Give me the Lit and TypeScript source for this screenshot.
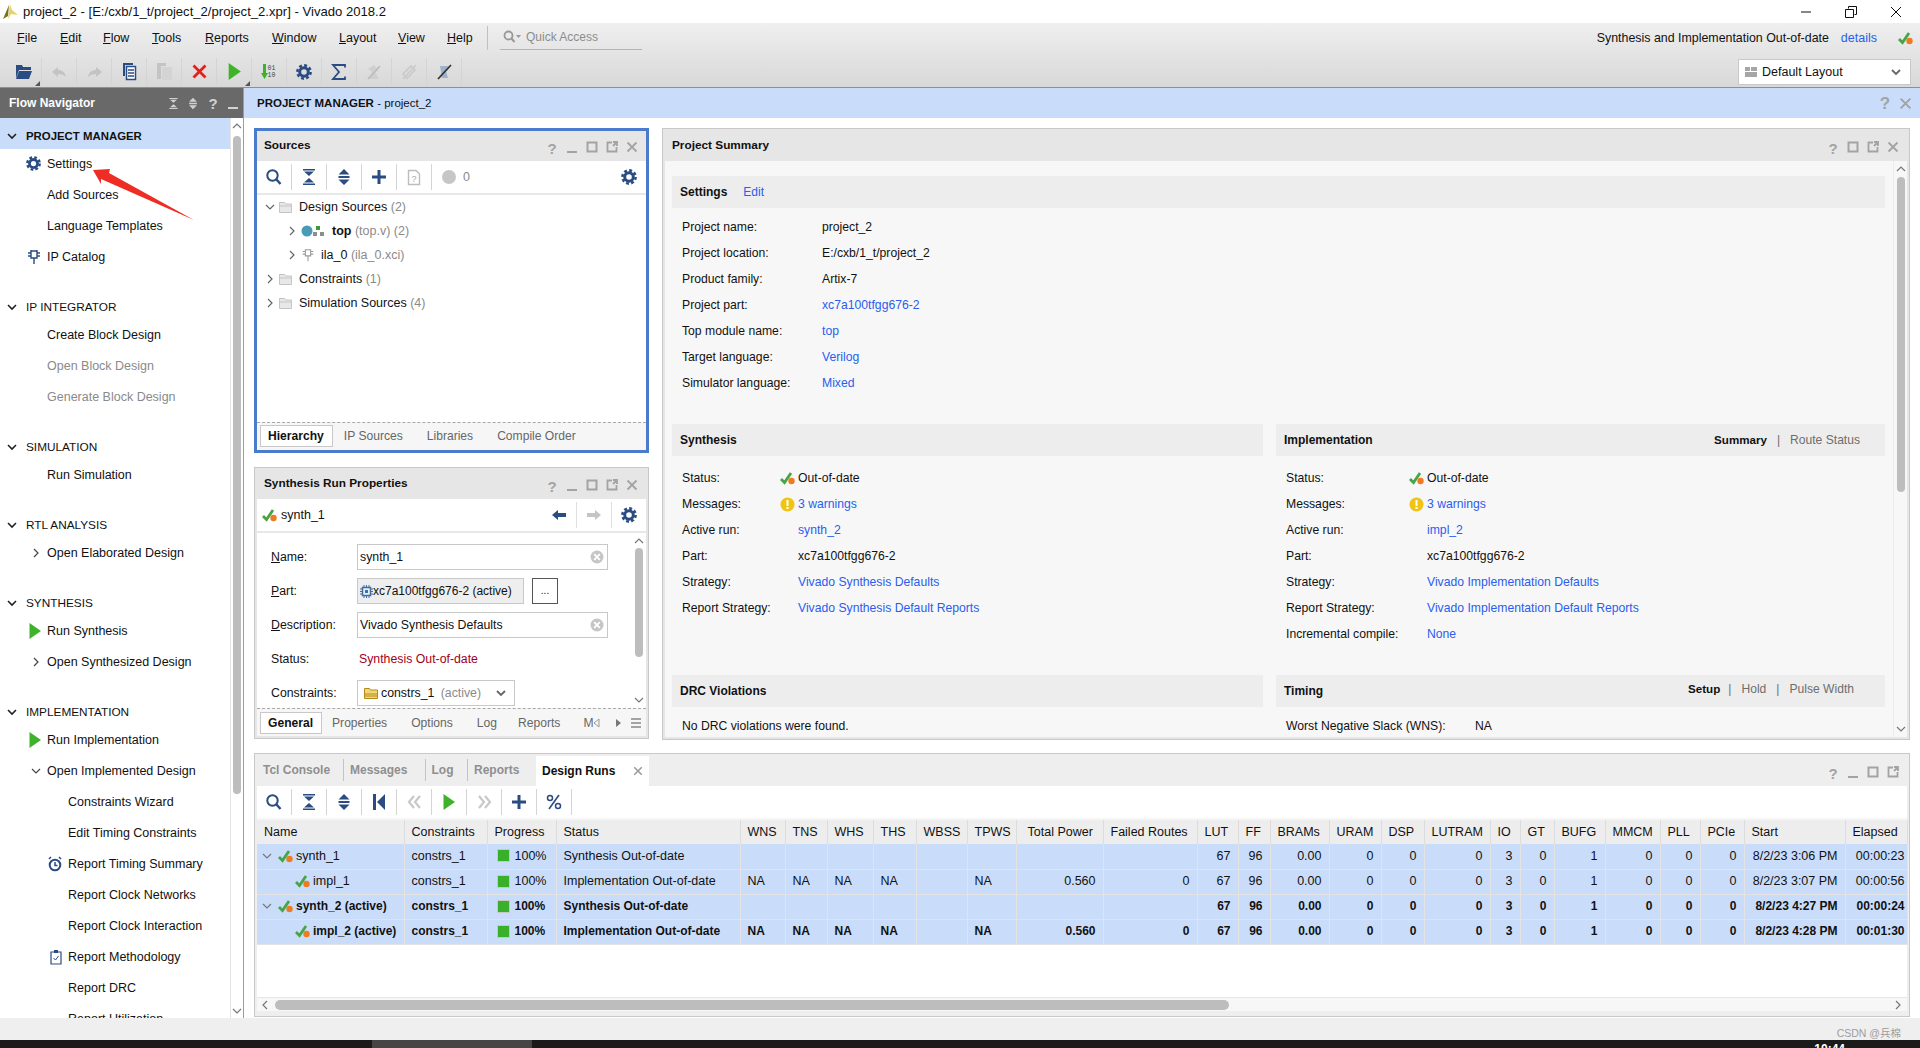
import { LitElement, html, css, TemplateResult } from "lit";
import { customElement } from "lit/decorators.js";

const BLUE = "#2b4c82";
const GREY = "#a3a3a3";

const s = {
  search: (c = BLUE) => html`<svg class="ic" width="18" height="18" viewBox="0 0 18 18"><circle cx="7.5" cy="7.5" r="5.2" fill="none" stroke=${c} stroke-width="2"/><path d="M11.5 11.5L15.5 16" stroke=${c} stroke-width="2.4" fill="none"/></svg>`,
  collapse: (c = BLUE, w = 16, h = 18) => html`<svg class="ic" width=${w} height=${h} viewBox="0 0 16 18"><path d="M2 1h12v1.6H2zM2 15.4h12V17H2zM3 3.5h10L8 8zM3 14.5h10L8 10z" fill=${c}/></svg>`,
  expand: (c = BLUE, w = 14, h = 18) => html`<svg class="ic" width=${w} height=${h} viewBox="0 0 14 18"><path d="M7 1l5.5 5.5h-11zM7 17l-5.5-5.5h11zM1.500 8h11v2h-11z" fill=${c}/></svg>`,
  plus: (c = BLUE) => html`<svg class="ic" width="16" height="16" viewBox="0 0 16 16"><path d="M6.500 1h3v5.500H15v3H9.500V15h-3V9.500H1v-3h5.500z" fill=${c}/></svg>`,
  docq: () => html`<svg class="ic" width="14" height="17" viewBox="0 0 14 17"><path d="M1.500 1.500h7.500l3.500 3.500v10.500h-11z" fill="none" stroke="#bdbdbd" stroke-width="1.400"/><text x="7" y="13" font-size="9" text-anchor="middle" fill="#aaa" font-family="Liberation Sans">?</text></svg>`,
  gear: (c = BLUE, z = 16) => html`<svg class="ic" width=${z} height=${z} viewBox="0 0 16 16"><circle cx="8" cy="8" r="4.300" fill="none" stroke=${c} stroke-width="3"/><circle cx="8" cy="8" r="6.600" fill="none" stroke=${c} stroke-width="2.600" stroke-dasharray="2.900 2.280"/></svg>`,
  play: (w = 12, h = 16) => html`<svg class="ic" width=${w} height=${h} viewBox="0 0 12 16"><path d="M0.500 0L12 8L0.500 16z" fill="#3db32a"/></svg>`,
  check: () => html`<svg class="ic" width="15" height="14" viewBox="0 0 15 14"><path d="M1 8l3.500 3.500L11 2" fill="none" stroke="#46a544" stroke-width="2.800"/><circle cx="11.500" cy="10" r="3.200" fill="#ee7b22"/></svg>`,
  warn: () => html`<svg class="ic" width="15" height="15" viewBox="0 0 15 15"><circle cx="7.500" cy="7.500" r="7" fill="#efc414"/><path d="M6.500 3h2v6h-2zM6.500 10h2v2h-2z" fill="#fff"/></svg>`,
  chevD: (c = "#666", w = 1.200) => html`<svg class="ic" width="10" height="10" viewBox="0 0 10 10"><path d="M1 3l4 4 4-4" fill="none" stroke=${c} stroke-width=${w}/></svg>`,
  chevR: (c = "#666") => html`<svg class="ic" width="10" height="10" viewBox="0 0 10 10"><path d="M3 1l4 4-4 4" fill="none" stroke=${c} stroke-width="1.200"/></svg>`,
  chevU: (c = "#777") => html`<svg class="ic" width="10" height="8" viewBox="0 0 10 8"><path d="M1 6l4-4 4 4" fill="none" stroke=${c} stroke-width="1.200"/></svg>`,
  chevL: (c = "#777") => html`<svg class="ic" width="8" height="10" viewBox="0 0 8 10"><path d="M6 1L2 5l4 4" fill="none" stroke=${c} stroke-width="1.200"/></svg>`,
  folder: () => html`<svg class="ic" width="13" height="12" viewBox="0 0 13 12"><path d="M0.500 1.500h5l1 1.500h6v8.500H.500z" fill="#e8e8e8" stroke="#c4c4c4"/><path d="M.5 5h12" stroke="#c4c4c4"/></svg>`,
  min: (c = GREY) => html`<svg class="ic" width="12" height="12" viewBox="0 0 12 12"><path d="M1 10h10v2H1z" fill=${c}/></svg>`,
  max: (c = GREY) => html`<svg class="ic" width="12" height="12" viewBox="0 0 12 12"><rect x="1.500" y="1.500" width="9" height="9" fill="none" stroke=${c} stroke-width="2"/></svg>`,
  pop: (c = GREY) => html`<svg class="ic" width="12" height="12" viewBox="0 0 12 12"><path d="M6 1.500H1.500v9h9V6M7 1h4v4M11 1L7 5" fill="none" stroke=${c} stroke-width="1.800"/></svg>`,
  close: (c = GREY, z = 12) => html`<svg class="ic" width=${z} height=${z} viewBox="0 0 12 12"><path d="M1.500 1.500l9 9M10.500 1.500l-9 9" fill="none" stroke=${c} stroke-width="1.800"/></svg>`,
  clear: () => html`<svg class="ic" width="14" height="14" viewBox="0 0 14 14"><circle cx="7" cy="7" r="6.500" fill="#c6c6c6"/><path d="M4.200 4.200l5.600 5.600M9.800 4.200l-5.600 5.600" stroke="#fff" stroke-width="1.800"/></svg>`,
  ipcat: (c = BLUE) => html`<svg class="ic" width="14" height="16" viewBox="0 0 14 16"><path d="M4 2h6v7H4zM7 9v6M1 4h3M1 7h3M10 4h3M10 7h3M4 1v1M10 1v1" fill="none" stroke=${c} stroke-width="1.400"/></svg>`,
  clock: () => html`<svg class="ic" width="14" height="16" viewBox="0 0 14 16"><circle cx="7" cy="9" r="5.300" fill="none" stroke=${BLUE} stroke-width="2"/><path d="M7 6v3.500h2.500M1 3l2-2M13 3l-2-2" fill="none" stroke=${BLUE} stroke-width="1.500"/></svg>`,
  clip: () => html`<svg class="ic" width="12" height="16" viewBox="0 0 12 16"><path d="M1 3h10v12H1z" fill="none" stroke=${BLUE} stroke-width="1.200"/><path d="M4 1h4v3H4z" fill=${BLUE}/><path d="M3.500 9l2 2 3-4" fill="none" stroke=${BLUE}/></svg>`,
};

const nav: any[] = [
  { sec: "PROJECT MANAGER", first: true, items: [
    { t: "Settings", i: s.gear(BLUE, 15) }, { t: "Add Sources" }, { t: "Language Templates" }, { t: "IP Catalog", i: s.ipcat() }] },
  { sec: "IP INTEGRATOR", items: [{ t: "Create Block Design" }, { t: "Open Block Design", off: 1 }, { t: "Generate Block Design", off: 1 }] },
  { sec: "SIMULATION", items: [{ t: "Run Simulation" }] },
  { sec: "RTL ANALYSIS", items: [{ t: "Open Elaborated Design", i: s.chevR("#444") }] },
  { sec: "SYNTHESIS", items: [{ t: "Run Synthesis", i: s.play() }, { t: "Open Synthesized Design", i: s.chevR("#444") }] },
  { sec: "IMPLEMENTATION", items: [
    { t: "Run Implementation", i: s.play() }, { t: "Open Implemented Design", i: s.chevD("#444") },
    { t: "Constraints Wizard", l2: 1 }, { t: "Edit Timing Constraints", l2: 1 },
    { t: "Report Timing Summary", l2: 1, i: s.clock() }, { t: "Report Clock Networks", l2: 1 }, { t: "Report Clock Interaction", l2: 1 },
    { t: "Report Methodology", l2: 1, i: s.clip() }, { t: "Report DRC", l2: 1 }, { t: "Report Utilization", l2: 1 }] },
];

const colEnds = [404, 487, 556, 740, 785, 827, 873, 916, 967, 1016, 1103, 1197, 1238, 1270, 1329, 1381, 1424, 1490, 1520, 1554, 1605, 1660, 1700, 1744, 1845, 1907];
const colW = colEnds.map((e, i) => e - (i ? colEnds[i - 1] : 257));
const heads = ["Name", "Constraints", "Progress", "Status", "WNS", "TNS", "WHS", "THS", "WBSS", "TPWS", "Total Power", "Failed Routes", "LUT", "FF", "BRAMs", "URAM", "DSP", "LUTRAM", "IO", "GT", "BUFG", "MMCM", "PLL", "PCIe", "Start", "Elapsed"];
const runs = [
  { n: "synth_1", top: 1, b: 0, st: "Synthesis Out-of-date", na: 0, start: "8/2/23 3:06 PM", el: "00:00:23" },
  { n: "impl_1", top: 0, b: 0, st: "Implementation Out-of-date", na: 1, start: "8/2/23 3:07 PM", el: "00:00:56" },
  { n: "synth_2 (active)", top: 1, b: 1, st: "Synthesis Out-of-date", na: 0, start: "8/2/23 4:27 PM", el: "00:00:24" },
  { n: "impl_2 (active)", top: 0, b: 1, st: "Implementation Out-of-date", na: 1, start: "8/2/23 4:28 PM", el: "00:01:30" },
];
const bottomTabs: [string, number][] = [["Tcl Console", 87], ["Messages", 81.5], ["Log", 42.5], ["Reports", 68]];

@customElement("app-root")
export class AppRoot extends LitElement {
  static styles = css`
    :host { display: block; width: 1920px; height: 1048px; overflow: hidden; position: relative; background: #fff;
      font: 12.5px "Liberation Sans", Arial, sans-serif; color: #111; }
    * { box-sizing: border-box; }
    .ic { display: block; flex: none; overflow: visible; }
    u { text-decoration: underline; text-underline-offset: 1px; }
    .root { display: flex; flex-direction: column; height: 1048px; }
    .title { height: 23px; display: flex; align-items: center; padding-left: 3px; gap: 4px; font-size: 13.1px; flex: none; }
    .title .sp { flex: 1; }
    .win { display: flex; gap: 31px; padding-right: 17px; }
    .band { height: 65px; flex: none; background: linear-gradient(#efefef, #d8d8d8); border-bottom: 1px solid #8f8f8f; display: flex; flex-direction: column; }
    .menu { height: 29px; display: flex; align-items: center; flex: none; }
    .menu .m { width: var(--w); }
    .mbox { padding-left: 17px; display: flex; align-items: center; }
    .msep { width: 1px; height: 24px; background: #c0c0c0; margin-right: 12px; }
    .qa { width: 142px; height: 23px; margin-top: 1px; border-bottom: 1px solid #b5b5b5; display: flex; align-items: center; gap: 4px; padding: 0 0 2px 3px; color: #8c8c8c; font-size: 12px; }
    .grow { flex: 1; }
    .ood { margin-right: 12px; font-size: 12.4px; }
    .link { color: #2a5df0; }
    .mcheck { margin: 0 7px 0 21px; }
    .tools { height: 35px; display: flex; align-items: center; padding: 4px 0 0 7px; }
    .tb { width: 35px; height: 28px; display: flex; align-items: center; justify-content: center; border-right: 1px solid #d4d4d4; position: relative; flex: none; }
    .tb .corner { position: absolute; right: 1px; bottom: 0; width: 0; height: 0; border-left: 5px solid transparent; border-bottom: 5px solid #555; }
    .layout { margin: 0 9px 0 auto; width: 173px; height: 26px; background: #fff; border: 1px solid #c8c8c8; display: flex; align-items: center; padding: 0 9px 0 6px; gap: 5px; }
    .main { flex: 1; display: flex; min-height: 0; }
    .nav { width: 244px; flex: none; border-right: 1px solid #9c9c9c; display: flex; flex-direction: column; }
    .navh { height: 30px; flex: none; background: #696969; color: #fff; font-weight: bold; display: flex; align-items: center; padding-left: 9px; font-size: 12px; }
    .navh span { flex: 1; }
    .navh .c { width: 20px; display: flex; justify-content: center; }
    .navb { flex: 1; display: flex; min-height: 0; }
    .navl { width: 230px; flex: none; overflow: hidden; }
    .vs { display: flex; flex-direction: column; align-items: center; flex: none; }
    .nvs { width: 13px; border-left: 1px solid #e4e4e4; padding-top: 4px; }
    .thumb { background: #bdbdbd; border-radius: 4px; width: 8px; }
    .nvs .thumb { height: 658px; margin: 6px 0 0; }
    .vs .sp { flex: 1; }
    .sec { height: 25px; margin-top: 22px; display: flex; align-items: center; padding-left: 7px; gap: 9px; font-size: 11.800px; }
    .sec.first { height: 31px; margin: 0 0 -1px; background: #c9ddfb; padding-top: 4px; font-size: 11.400px; }
    .sec.first b { font-weight: bold; }
    .sec b { font-weight: normal; }
    .it { height: 31px; display: flex; align-items: center; }
    .it.off { color: #8a8a8a; }
    .slot { width: 47px; flex: none; display: flex; justify-content: flex-end; padding-right: 6px; }
    .l2 .slot { width: 68px; }
    .right { flex: 1; min-width: 0; display: flex; flex-direction: column; }
    .rhead { height: 30px; flex: none; background: #c9ddfb; display: flex; align-items: center; padding: 0 8px 0 13px; font-size: 11.500px; gap: 8px; }
    .rhead span { flex: 1; }
    .rhead b { font-weight: bold; }
    .content { flex: 1; display: grid; grid-template-columns: 395px 1248px; grid-template-rows: 612px 264px; gap: 13px; padding: 10px 0 0 10px; }
    .col { display: flex; flex-direction: column; }
    .panel { border: 1px solid #c8c8c8; padding: 2px; background: #e6e6e6; display: flex; flex-direction: column; overflow: hidden; }
    .panel.active { border: 3px solid #4a7ccb; padding: 0; }
    .src { height: 325px; flex: none; margin-bottom: 14px; }
    .prop { height: 272px; flex: none; }
    .ph { height: 30px; flex: none; display: flex; align-items: center; padding: 0 0 3px 7px; font-weight: bold; font-size: 11.800px; }
    .prop .ph { height: 29px; padding-bottom: 4px; }
    .ph span { flex: 1; }
    .ctl { display: flex; gap: 8px; padding: 6px 8px 0 0; }
    .tbar { height: 32px; flex: none; background: #fff; display: flex; align-items: center; }
    .tbar .tb { height: 26px; }
    .rule { height: 2px; flex: none; background: #e8e8e8; }
    .zero { display: flex; align-items: center; gap: 7px; color: #8a8a8a; padding-left: 10px; }
    .dot { width: 14px; height: 14px; border-radius: 50%; background: #c6c6c6; }
    .tend { margin-left: auto; padding-right: 9px; }
    .tree { flex: 1; background: #fff; min-height: 0; }
    .tr { height: 24px; display: flex; align-items: center; }
    .tr .ch { width: 10px; margin-right: 4px; }
    .muted { color: #8a8a8a; }
    .t0 { padding-left: 8px; }
    .t0 .folder { margin-right: 7px; }
    .t1 { padding-left: 30px; }
    .t1 .g { margin-right: 7px; }
    .t1 .g6 { margin-right: 6px; }
    .tbs { height: 28px; flex: none; background: #f6f6f6; border-top: 1px dashed #a8a8a8; display: flex; align-items: center; padding: 0 0 2px 3px; color: #666; font-size: 12.100px; }
    .prop .tbs { padding-bottom: 0; }
    .tbs .a { height: 22px; border: 1px solid #c8c8c8; background: #fff; color: #111; font-weight: bold; display: flex; align-items: center; padding: 0 8px 0 7px; margin-right: 11px; }
    .prop .tbs .a { margin-right: 10px; }
    .tbs .n { margin-right: 24px; }
    .tbs .g21 { margin-right: 21px; }
    .tbs .g22 { margin-right: 23px; }
    .tbs .mm { display: flex; align-items: center; width: 32px; }
    .tbs .menu-i { margin-left: 8px; }
    .form { flex: 1; background: #fff; display: flex; min-height: 0; overflow: hidden; font-size: 12.300px; }
    .fbody { flex: 1; padding: 11px 0 0 14px; }
    .fr { display: flex; align-items: center; height: 26px; margin-bottom: 8px; flex: none; }
    .fr .lb { width: 86px; flex: none; }
    .inp { height: 26px; border: 1px solid #c8c8c8; display: flex; align-items: center; padding: 0 3px 0 2px; width: 251px; justify-content: space-between; }
    .pi { width: 167px; background: #eee; justify-content: flex-start; font-size: 12px; }
    .dots { width: 26px; height: 26px; border: 1px solid #555; margin-left: 8px; display: flex; align-items: center; justify-content: center; font-size: 10px; line-height: 1; }
    .red { color: #a30021; padding-left: 2px; }
    .sel { width: 158px; padding: 0 8px 0 6px; }
    .sel .nm { display: flex; gap: 3px; align-items: center; }
    .fvs { width: 14px; padding-top: 4px; }
    .fvs .thumb { height: 109px; margin-top: 3px; }
    .arrows { display: flex; margin-left: auto; align-items: center; }
    .arrows .b { width: 35px; height: 26px; display: flex; align-items: center; justify-content: center; border-right: 1px solid #e0e0e0; }
    .arrows .b:last-child { border-right: 0; width: 34px; }
    .runlabel { display: flex; align-items: center; gap: 4px; padding-left: 5px; }
    .sum { flex: 1; min-height: 0; display: flex; background: #f7f7f7; }
    .sbody { width: 1228px; flex: none; padding: 15px 8px 0 7px; overflow: hidden; font-size: 12.200px; }
    .svs { width: 14px; padding-top: 4px; border-left: 1px solid #ececec; }
    .svs .thumb { height: 315px; margin-top: 4px; }
    .sh { height: 32px; background: #ededed; display: flex; align-items: center; padding-left: 8px; font-weight: bold; font-size: 12px; }
    .sh .rt { margin-left: auto; display: flex; gap: 10px; font-weight: normal; color: #6d6d6d; font-size: 12.100px; }
    .sh .rt b { color: #111; font-size: 11.600px; }
    .r1 { padding-right: 25px; }
    .r2 { padding-right: 31px; margin-top: -4px; }
    .r2 b { margin-right: -2px; }
    .srows { padding: 6px 0 28px 10px; }
    .srow { height: 26px; display: flex; align-items: center; }
    .w140 { width: 140px; }
    .w98 { width: 98px; }
    .w123 { width: 123px; }
    .w189 { width: 189px; }
    .iw { width: 18px; flex: none; display: flex; }
    .two { display: grid; grid-template-columns: 591px 609px; column-gap: 13px; }
    .srows.t { padding-top: 9px; height: 219px; }
    .bot { grid-column: 1 / 3; background: #eee; }
    .btabs { height: 30px; flex: none; display: flex; align-items: stretch; background: #eee; color: #8f8f8f; font-weight: bold; font-size: 12px; }
    .bt { display: flex; align-items: center; padding: 0 6px; border-right: 1px solid #c4c4c4; margin: 3px 0 5px; width: var(--w); flex: none; }
    .bt.last { border-right: 0; }
    .bt.on { background: #fff; color: #111; margin: 0; border: 0; padding: 0 6px; width: 113px; justify-content: space-between; }
    .bctl { margin-left: auto; padding: 10px 8px 0 0; display: flex; gap: 8px; }
    .band2 { height: 2px; flex: none; background: #f6f6f6; }
    .tw { flex: 1; background: #fff; min-height: 0; }
    table { border-collapse: collapse; table-layout: fixed; width: 1650px; }
    th { height: 24px; background: #ededed; font-weight: normal; text-align: left; padding: 0 0 0 7px; border-right: 1px solid #dcdcdc; white-space: nowrap; overflow: hidden; }
    th.tp { padding-left: 11px; }
    td { height: 25px; background: #c9ddfb; border-right: 1px solid #e3e3e3; border-bottom: 1px solid #e3e3e3; padding: 0 7px 1px; white-space: nowrap; overflow: hidden; }
    td.num { text-align: right; }
    td.pc { padding-left: 9px; }
    td.nc { padding-left: 5px; }
    td.nc.child { padding-left: 38px; }
    td.last { padding-right: 2px; }
    tr.b td { font-weight: bold; font-size: 12px; }
    .nmc { display: flex; align-items: center; gap: 3px; }
    .pr { display: flex; align-items: center; gap: 5px; }
    .sq { width: 13px; height: 13px; background: #3aaf29; border: 1px solid #c8c8c8; }
    .hs { height: 14px; flex: none; background: #f7f7f7; border-top: 1px solid #e6e6e6; display: flex; align-items: center; padding: 0 4px; margin-bottom: 3px; }
    .hth { width: 954px; height: 10px; background: #bdbdbd; border-radius: 5px; margin-left: 6px; }
    .foot { height: 22px; flex: none; background: #efefef; display: flex; justify-content: flex-end; align-items: center; padding: 6px 19px 0 0; color: #9d9d9d; font-size: 10.500px; font-family: "Liberation Sans", "Noto Sans CJK SC", sans-serif; }
    .task { height: 8px; flex: none; background: #1a1a1a; display: flex; overflow: hidden; }
    .task i { display: block; width: 160px; background: #454545; margin-left: 372px; }
    .task span { margin-left: auto; margin-right: 75px; color: #fff; font-size: 12px; line-height: 19px; font-weight: bold; }
    .arrow { position: absolute; left: 0; top: 0; pointer-events: none; }
  `;

  private q(size = 15) {
    return html`<svg class="ic" width="12" height="14" viewBox="0 0 12 14"><text x="6" y="13" text-anchor="middle" font-size=${size} font-weight="bold" fill=${GREY} font-family="Liberation Sans">?</text></svg>`;
  }

  private ctl(withMin = true) {
    return html`<div class="ctl">${this.q()}${withMin ? s.min() : ""}${s.max()}${s.pop()}${s.close()}</div>`;
  }

  private tb(i: TemplateResult | string, corner = false) {
    return html`<div class="tb">${i}${corner ? html`<div class="corner"></div>` : ""}</div>`;
  }

  private renderNav() {
    return nav.map((g) => html`
      <div class="sec ${g.first ? "first" : ""}">${s.chevD("#222", 1.6)}<b>${g.sec}</b></div>
      ${g.items.map((it: any) => html`<div class="it ${it.off ? "off" : ""} ${it.l2 ? "l2" : ""}"><div class="slot">${it.i ?? ""}</div>${it.t}</div>`)}
    `);
  }

  private rowsOf(rows: any[]) {
    return rows.map((r) => html`<div class="srow"><div class=${r.w}>${r.l}</div>${r.i !== undefined ? html`<div class="iw">${r.i}</div>` : ""}<div class=${r.link ? "link" : ""}>${r.v}</div></div>`);
  }

  private renderTable() {
    return html`<table><colgroup>${colW.map((w) => html`<col style="width:${w}px"/>`)}</colgroup>
      <thead><tr>${heads.map((h) => html`<th class=${h === "Total Power" ? "tp" : ""}>${h}</th>`)}</tr></thead>
      <tbody>${runs.map((r) => {
        const na = r.na ? "NA" : "";
        return html`<tr class=${r.b ? "b" : ""}>
          <td class="nc ${r.top ? "" : "child"}"><div class="nmc">${r.top ? html`${s.chevD("#777")}<span></span>` : ""}${s.check()}${r.n}</div></td>
          <td>constrs_1</td>
          <td class="pc"><div class="pr"><div class="sq"></div>100%</div></td>
          <td>${r.st}</td>
          <td>${na}</td><td>${na}</td><td>${na}</td><td>${na}</td><td></td><td>${na}</td>
          <td class="num">${r.na ? "0.560" : ""}</td><td class="num">${r.na ? "0" : ""}</td>
          <td class="num">67</td><td class="num">96</td><td class="num">0.00</td><td class="num">0</td><td class="num">0</td><td class="num">0</td>
          <td class="num">3</td><td class="num">0</td><td class="num">1</td><td class="num">0</td><td class="num">0</td><td class="num">0</td>
          <td class="num">${r.start}</td><td class="num last">${r.el}</td>
        </tr>`;
      })}</tbody></table>`;
  }

  render() {
    return html`<div class="root">
      <div class="title">
        <svg class="ic" width="16" height="16" viewBox="0 0 16 16"><path d="M7 0l2 6 6 5-7-1-3 5 1-8z" fill="#e7d26a"/><path d="M6 1L0 15l5-3z" fill="#75751c"/></svg>
        <span>project_2 - [E:/cxb/1_t/project_2/project_2.xpr] - Vivado 2018.2</span><span class="sp"></span>
        <div class="win">
          <svg class="ic" width="14" height="14" viewBox="0 0 14 14"><path d="M2 7h10" stroke="#111"/></svg>
          <svg class="ic" width="14" height="14" viewBox="0 0 14 14"><path d="M4.500 3.500v-2h8v8h-2M1.500 4.500h8v8h-8z" fill="none" stroke="#111"/></svg>
          <svg class="ic" width="14" height="14" viewBox="0 0 14 14"><path d="M2 2l10 10M12 2L2 12" stroke="#111"/></svg>
        </div>
      </div>
      <div class="band">
        <div class="menu mbox">
          ${[["F","ile",43],["E","dit",43],["F","low",49],["T","ools",53],["R","eports",67],["W","indow",67],["L","ayout",59],["V","iew",49],["H","elp",40]].map(([a,b,w]) => html`<div class="m" style="--w:${w}px"><u>${a}</u>${b}</div>`)}
          <div class="msep"></div>
          <div class="qa"><svg class="ic" width="19" height="13" viewBox="0 0 19 13"><circle cx="5.500" cy="5.500" r="4" fill="none" stroke="#999" stroke-width="1.800"/><path d="M8.500 8.500l3 3.500" stroke="#999" stroke-width="2"/><path d="M13 5h5l-2.500 3z" fill="#999"/></svg>Quick Access</div>
          <span class="grow"></span>
          <span class="ood">Synthesis and Implementation Out-of-date</span><span class="link">details</span><span class="mcheck">${s.check()}</span>
        </div>
        <div class="tools">
          ${this.tb(html`<svg class="ic" width="18" height="16" viewBox="0 0 18 16"><path d="M1 1h6l1 2h8v3H4L1 14z" fill=${BLUE}/><path d="M4 7h13l-3 8H1z" fill=${BLUE}/></svg>`, true)}
          ${this.tb(html`<svg class="ic" width="17" height="12" viewBox="0 0 17 12"><path d="M7 1L1 6l6 5V8c4 0 6 1 8 3-1-5-4-7-8-7z" fill="#c3c3c3"/></svg>`)}
          ${this.tb(html`<svg class="ic" width="17" height="12" viewBox="0 0 17 12"><path d="M10 1l6 5-6 5V8c-4 0-6 1-8 3 1-5 4-7 8-7z" fill="#c3c3c3"/></svg>`)}
          ${this.tb(html`<svg class="ic" width="15" height="18" viewBox="0 0 15 18"><path d="M1 0h10v2H3v11H1z" fill=${BLUE}/><path d="M4.500 3.500h9v13h-9z" fill="#fff" stroke=${BLUE} stroke-width="1.500"/><path d="M6 7h6M6 10h6M6 13h6" stroke=${BLUE} stroke-width="1.300"/></svg>`)}
          ${this.tb(html`<svg class="ic" width="15" height="17" viewBox="0 0 15 17"><path d="M0 0h9v3H4v13H0z" fill="#c4c4c4"/><path d="M5 4h10v13H5z" fill="#d4d4d4"/></svg>`)}
          ${this.tb(html`<svg class="ic" width="15" height="15" viewBox="0 0 15 15"><path d="M1.500 1.500l12 12M13.500 1.500l-12 12" stroke="#e3201b" stroke-width="2.800"/></svg>`)}
          ${this.tb(s.play(13, 17), true)}
          ${this.tb(html`<svg class="ic" width="16" height="17" viewBox="0 0 16 17"><path d="M2 1h3v9h2l-3.500 6L0 10h2z" fill="#3db32a"/><text x="6.500" y="7" font-size="6.500" font-family="Liberation Mono" fill="#444">01</text><text x="6.500" y="14" font-size="6.500" font-family="Liberation Mono" fill="#444">10</text></svg>`)}
          ${this.tb(s.gear())}
          ${this.tb(html`<svg class="ic" width="14" height="16" viewBox="0 0 14 16"><path d="M13 3.500V1H1l6 7-6 7h12v-2.500" fill="none" stroke=${BLUE} stroke-width="1.800"/></svg>`)}
          ${this.tb(html`<svg class="ic" width="15" height="16" viewBox="0 0 15 16"><path d="M7 1l5 6-4 1 4 7H1l4-7-4-3" fill="#cfcfcf"/><path d="M1 15L13 2" stroke="#bbb" stroke-width="1.500"/></svg>`)}
          ${this.tb(html`<svg class="ic" width="15" height="16" viewBox="0 0 15 16"><path d="M9 2l4 4-8 8-4-4zM1 15L14 1" fill="none" stroke="#c9c9c9" stroke-width="1.600"/></svg>`)}
          ${this.tb(html`<svg class="ic" width="15" height="16" viewBox="0 0 15 16"><path d="M3 2h8l-2 5 2 7H5z" fill="#9fb2cc"/><path d="M1 15L14 1" stroke="#333" stroke-width="1.800"/></svg>`)}
          <div class="layout"><svg class="ic" width="12" height="10" viewBox="0 0 12 10"><path d="M0 0h5v4H0zM6 0h6v4H6zM0 5h12v5H0z" fill="#a6a6a6"/></svg>Default Layout<span class="grow"></span>${s.chevD("#666", 1.8)}</div>
        </div>
      </div>

      <div class="main">
        <div class="nav">
          <div class="navh"><span>Flow Navigator</span>
            <div class="c">${s.collapse("#d0d0d0", 11, 13)}</div><div class="c">${s.expand("#d0d0d0", 10, 13)}</div>
            <div class="c"><svg class="ic" width="12" height="16" viewBox="0 0 12 16"><text x="6" y="14" text-anchor="middle" font-size="15" font-weight="bold" fill="#d2d2d2" font-family="Liberation Sans">?</text></svg></div>
            <div class="c">${s.min("#d2d2d2")}</div>
          </div>
          <div class="navb">
            <div class="navl">${this.renderNav()}</div>
            <div class="vs nvs">${s.chevU()}<div class="thumb"></div><div class="sp"></div>${s.chevD("#777")}<div style="height:2px"></div></div>
          </div>
        </div>
        <div class="right">
          <div class="rhead"><span><b>PROJECT MANAGER</b> - project_2</span>
            ${this.q(17)}${s.close(GREY, 13)}
          </div>
          <div class="content">
            <div class="col">
              <div class="panel active src">
                <div class="ph"><span>Sources</span>${this.ctl()}</div>
                <div class="tbar">
                  ${this.tb(s.search())}${this.tb(s.collapse())}${this.tb(s.expand())}${this.tb(s.plus())}${this.tb(s.docq())}
                  <div class="zero"><div class="dot"></div>0</div>
                  <div class="tend">${s.gear()}</div>
                </div>
                <div class="rule"></div>
                <div class="tree">
                  <div class="tr t0"><span class="ch">${s.chevD()}</span><span class="folder">${s.folder()}</span>Design Sources&nbsp;<span class="muted">(2)</span></div>
                  <div class="tr t1"><span class="ch">${s.chevR()}</span>
                    <svg class="ic g" width="24" height="12" viewBox="0 0 24 12"><circle cx="6" cy="6" r="5.500" fill="#4a9bb5"/><path d="M15 1h4v4h-4z" fill="#3c9a3c"/><path d="M12 7h4v4h-4zM19 7h4v4h-4z" fill="#8d8d8d"/></svg>
                    <b>top</b>&nbsp;<span class="muted">(top.v) (2)</span></div>
                  <div class="tr t1"><span class="ch">${s.chevR()}</span>
                    <svg class="ic g6" width="14" height="14" viewBox="0 0 14 16"><path d="M4 2h6v7H4zM7 9v6M1 4h3M1 7h3M10 4h3M10 7h3" fill="none" stroke="#999" stroke-width="1.200"/></svg>
                    ila_0&nbsp;<span class="muted">(ila_0.xci)</span></div>
                  <div class="tr t0"><span class="ch">${s.chevR()}</span><span class="folder">${s.folder()}</span>Constraints&nbsp;<span class="muted">(1)</span></div>
                  <div class="tr t0"><span class="ch">${s.chevR()}</span><span class="folder">${s.folder()}</span>Simulation Sources&nbsp;<span class="muted">(4)</span></div>
                </div>
                <div class="tbs"><div class="a">Hierarchy</div><div class="n">IP Sources</div><div class="n">Libraries</div><div>Compile Order</div></div>
              </div>
              <div class="panel prop">
                <div class="ph"><span>Synthesis Run Properties</span>${this.ctl()}</div>
                <div class="tbar"><div class="runlabel">${s.check()}synth_1</div>
                  <div class="arrows">
                    <div class="b"><svg class="ic" width="14" height="10" viewBox="0 0 14 10"><path d="M0 5l6-5v3h8v4H6v3z" fill=${BLUE}/></svg></div>
                    <div class="b"><svg class="ic" width="14" height="10" viewBox="0 0 14 10"><path d="M14 5L8 0v3H0v4h8v3z" fill="#c4c4c4"/></svg></div>
                    <div class="b">${s.gear()}</div>
                  </div>
                </div>
                <div class="rule"></div>
                <div class="form">
                  <div class="fbody">
                    <div class="fr"><div class="lb"><u>N</u>ame:</div><div class="inp">synth_1${s.clear()}</div></div>
                    <div class="fr"><div class="lb"><u>P</u>art:</div><div class="inp pi"><svg class="ic" width="13" height="13" viewBox="0 0 13 13"><rect x="2.500" y="2.500" width="8" height="8" fill="none" stroke="#3c6ea8" stroke-width="1.500"/><rect x="5" y="5" width="3" height="3" fill="#3c6ea8"/><path d="M4 0v2M6.500 0v2M9 0v2M4 11v2M6.500 11v2M9 11v2M0 4h2M0 6.500h2M0 9h2M11 4h2M11 6.500h2M11 9h2" stroke="#3c6ea8"/></svg>xc7a100tfgg676-2 (active)</div><div class="dots">...</div></div>
                    <div class="fr"><div class="lb"><u>D</u>escription:</div><div class="inp">Vivado Synthesis Defaults${s.clear()}</div></div>
                    <div class="fr"><div class="lb">Status:</div><div class="red">Synthesis Out-of-date</div></div>
                    <div class="fr"><div class="lb">Constraints:</div><div class="inp sel"><span class="nm"><svg class="ic" width="14" height="11" viewBox="0 0 14 11"><path d="M0.500 .5h5l1 1.500h7v8.500H.500z" fill="#f2d777" stroke="#b58a1b"/><path d="M1 6h12M1 8h12" stroke="#b58a1b"/></svg>constrs_1&nbsp;<span class="muted">(active)</span></span>${s.chevD("#666", 1.8)}</div></div>
                  </div>
                  <div class="vs fvs">${s.chevU()}<div class="thumb"></div><div class="sp"></div>${s.chevD("#777")}<div style="height:3px"></div></div>
                </div>
                <div class="tbs"><div class="a">General</div>
                  <div class="n">Properties</div><div class="n">Options</div><div class="g21">Log</div><div class="g22">Reports</div>
                  <div class="mm">M<svg class="ic" width="8" height="10" viewBox="0 0 8 10"><path d="M6 1L1 5l5 4z" fill="none" stroke="#999"/></svg></div>
                  <svg class="ic" width="8" height="10" viewBox="0 0 8 10"><path d="M1 1l5 4-5 4z" fill="#777"/></svg>
                  <svg class="ic menu-i" width="10" height="10" viewBox="0 0 10 10"><path d="M0 1h10M0 5h10M0 9h10" stroke="#888" stroke-width="1.300"/></svg>
                </div>
              </div>
            </div>

            <div class="panel">
              <div class="ph"><span>Project Summary</span>${this.ctl(false)}</div>
              <div class="sum">
                <div class="sbody">
                  <div class="sh">Settings<span class="link" style="margin-left:16px;font-weight:normal">Edit</span></div>
                  <div class="srows">${this.rowsOf([
                    { l: "Project name:", v: "project_2", w: "w140" }, { l: "Project location:", v: "E:/cxb/1_t/project_2", w: "w140" },
                    { l: "Product family:", v: "Artix-7", w: "w140" }, { l: "Project part:", v: "xc7a100tfgg676-2", w: "w140", link: 1 },
                    { l: "Top module name:", v: "top", w: "w140", link: 1 }, { l: "Target language:", v: "Verilog", w: "w140", link: 1 },
                    { l: "Simulator language:", v: "Mixed", w: "w140", link: 1 }])}</div>
                  <div class="two">
                    <div>
                      <div class="sh">Synthesis</div>
                      <div class="srows t">${this.rowsOf([
                        { l: "Status:", i: s.check(), v: "Out-of-date", w: "w98" }, { l: "Messages:", i: s.warn(), v: "3 warnings", w: "w98", link: 1 },
                        { l: "Active run:", i: "", v: "synth_2", w: "w98", link: 1 }, { l: "Part:", i: "", v: "xc7a100tfgg676-2", w: "w98" },
                        { l: "Strategy:", i: "", v: "Vivado Synthesis Defaults", w: "w98", link: 1 }, { l: "Report Strategy:", i: "", v: "Vivado Synthesis Default Reports", w: "w98", link: 1 }])}</div>
                    </div>
                    <div>
                      <div class="sh">Implementation<div class="rt r1"><b>Summary</b><span>|</span><span>Route Status</span></div></div>
                      <div class="srows t">${this.rowsOf([
                        { l: "Status:", i: s.check(), v: "Out-of-date", w: "w123" }, { l: "Messages:", i: s.warn(), v: "3 warnings", w: "w123", link: 1 },
                        { l: "Active run:", i: "", v: "impl_2", w: "w123", link: 1 }, { l: "Part:", i: "", v: "xc7a100tfgg676-2", w: "w123" },
                        { l: "Strategy:", i: "", v: "Vivado Implementation Defaults", w: "w123", link: 1 }, { l: "Report Strategy:", i: "", v: "Vivado Implementation Default Reports", w: "w123", link: 1 },
                        { l: "Incremental compile:", i: "", v: "None", w: "w123", link: 1 }])}</div>
                    </div>
                    <div>
                      <div class="sh">DRC Violations</div>
                      <div class="srows"><div class="srow">No DRC violations were found.</div></div>
                    </div>
                    <div>
                      <div class="sh">Timing<div class="rt r2"><b>Setup</b><span>|</span><span>Hold</span><span>|</span><span>Pulse Width</span></div></div>
                      <div class="srows">${this.rowsOf([{ l: "Worst Negative Slack (WNS):", v: "NA", w: "w189" }])}</div>
                    </div>
                  </div>
                </div>
                <div class="vs svs">${s.chevU()}<div class="thumb"></div><div class="sp"></div>${s.chevD("#777")}<div style="height:3px"></div></div>
              </div>
            </div>

            <div class="panel bot">
              <div class="btabs">
                ${bottomTabs.map(([t, w], i) => html`<div class="bt ${i === 3 ? "last" : ""}" style="--w:${w}px">${t}</div>`)}
                <div class="bt on">Design Runs${s.close("#999", 10)}</div>
                <div class="bctl">${this.q()}${s.min()}${s.max()}${s.pop()}</div>
              </div>
              <div class="tbar">
                ${this.tb(s.search())}${this.tb(s.collapse())}${this.tb(s.expand())}
                ${this.tb(html`<svg class="ic" width="14" height="16" viewBox="0 0 14 16"><path d="M1 0h3v16H1zM13 0v16L5 8z" fill=${BLUE}/></svg>`)}
                ${this.tb(html`<svg class="ic" width="15" height="14" viewBox="0 0 15 14"><path d="M7 1L2 7l5 6M13 1L8 7l5 6" fill="none" stroke="#c8c8c8" stroke-width="2.200"/></svg>`)}
                ${this.tb(s.play())}
                ${this.tb(html`<svg class="ic" width="15" height="14" viewBox="0 0 15 14"><path d="M2 1l5 6-5 6M8 1l5 6-5 6" fill="none" stroke="#c8c8c8" stroke-width="2.200"/></svg>`)}
                ${this.tb(s.plus())}
                ${this.tb(html`<svg class="ic" width="16" height="16" viewBox="0 0 16 16"><circle cx="4" cy="4" r="2.500" fill="none" stroke=${BLUE} stroke-width="1.500"/><circle cx="12" cy="12" r="2.500" fill="none" stroke=${BLUE} stroke-width="1.500"/><path d="M13 1L3 15" stroke=${BLUE} stroke-width="1.600"/></svg>`)}
              </div>
              <div class="band2"></div>
              <div class="tw">${this.renderTable()}</div>
              <div class="hs">${s.chevL()}<div class="hth"></div><span class="grow"></span>${s.chevR("#777")}</div>
            </div>
          </div>
        </div>
      </div>
      <div class="foot">CSDN @兵棉</div>
      <div class="task"><i></i><span>10:44</span></div>
      <svg class="arrow" width="220" height="240" viewBox="0 0 220 240"><path d="M93 170L110 169L109 173L194 220L101 179L101 184z" fill="#ee2e24"/></svg>
    </div>`;
  }
}
